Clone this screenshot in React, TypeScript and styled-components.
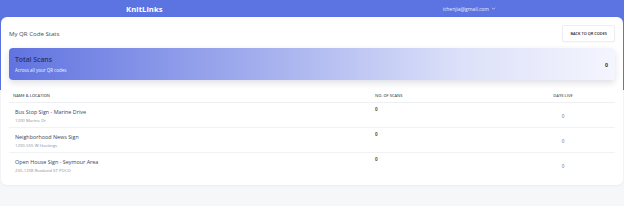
import styled, { createGlobalStyle } from 'styled-components';

const GlobalStyle = createGlobalStyle`
  html, body {
    margin: 0;
    padding: 0;
  }
  body {
    font-family: 'Open Sans', 'Liberation Sans', sans-serif;
    background: linear-gradient(to bottom, #5c73e2 0, #5c73e2 90px, #f6f7f9 90px);
    min-height: 206px;
  }
`;

const Nav = styled.header`
  height: 17px;
  display: flex;
  align-items: center;
  justify-content: space-between;
  padding: 0 128px 0 126px;
  color: #fff;
`;

const Brand = styled.div`
  font-size: 7.6px;
  font-weight: 700;
  letter-spacing: 0.1px;
`;

const Account = styled.div`
  display: flex;
  align-items: center;
  gap: 2px;
  font-size: 5px;
  color: #e8ebff;
`;

const Card = styled.main`
  margin: 0 1px;
  background: #fff;
  border-radius: 6px;
  padding: 8px 8px 8px;
  box-shadow: 0 1px 3px rgba(20, 30, 60, 0.05);
`;

const TitleRow = styled.div`
  display: flex;
  align-items: center;
  justify-content: space-between;
`;

const Title = styled.h1`
  margin: 0;
  font-size: 6.1px;
  font-weight: 400;
  color: #444a55;
`;

const BackButton = styled.button`
  height: 17px;
  padding: 0 7px;
  background: #fff;
  border: 1px solid #eceef2;
  border-radius: 2px;
  font-family: inherit;
  font-size: 3.9px;
  font-weight: 600;
  color: #222;
  text-transform: uppercase;
  box-shadow: 0 1px 2px rgba(0, 0, 0, 0.03);
`;

const Banner = styled.section`
  margin-top: 6px;
  height: 32px;
  border-radius: 4px;
  background: linear-gradient(90deg, #6173e0 0%, #a9b4ef 45%, #dde1f9 75%, #f4f5fe 100%);
  box-shadow: 0 3px 6px rgba(40, 50, 90, 0.15);
  display: flex;
  align-items: center;
  justify-content: space-between;
  padding: 0 7px 0 6px;
`;

const BannerText = styled.div`
  display: flex;
  flex-direction: column;
  gap: 3px;
`;

const BannerTitle = styled.div`
  font-size: 6.8px;
  font-weight: 600;
  color: #27326a;
`;

const BannerSub = styled.div`
  font-size: 4.5px;
  color: #f2f4ff;
`;

const BannerValue = styled.div`
  font-size: 5.2px;
  font-weight: 700;
  color: #333;
  padding-top: 2px;
`;

const Table = styled.div`
  margin-top: 9px;
`;

const Row = styled.div<{ $head?: boolean }>`
  display: grid;
  grid-template-columns: 362px 140px 1fr;
  height: ${(p) => (p.$head ? '13px' : '24px')};
  align-items: ${(p) => (p.$head ? 'center' : 'stretch')};
  border-bottom: 1px solid ${(p) => (p.$head ? '#eeeff2' : '#f1f2f4')};
  padding: 0 4px;

  &:last-child {
    border-bottom: none;
  }
`;

const HeadCell = styled.div<{ $center?: boolean }>`
  font-size: 4px;
  font-weight: 600;
  color: #555a66;
  text-transform: uppercase;
  text-align: ${(p) => (p.$center ? 'center' : 'left')};
`;

const NameCell = styled.div`
  display: flex;
  flex-direction: column;
  justify-content: center;
  gap: 1px;
  padding-left: 2px;
`;

const Name = styled.div`
  font-size: 5.4px;
  color: #3c4560;
`;

const Address = styled.div`
  font-size: 4.3px;
  color: #8a8f99;
`;

const ScanCell = styled.div`
  font-size: 4.6px;
  font-weight: 700;
  color: #555;
  padding-top: 3px;
`;

const DaysCell = styled.div`
  font-size: 4.6px;
  color: #666;
  display: flex;
  align-items: center;
  justify-content: center;
  padding-top: 2px;
`;

const rows = [
  { name: 'Bus Stop Sign - Marine Drive', address: '1200 Marine Dr', scans: 0, days: 0 },
  { name: 'Neighborhood News Sign', address: '1200-555 W Hastings', scans: 0, days: 0 },
  { name: 'Open House Sign - Seymour Area', address: '235-1208 Rowland ST POCO', scans: 0, days: 0 },
];

function App() {
  return (
    <>
      <GlobalStyle />
      <Nav>
        <Brand>KnitLinks</Brand>
        <Account>
          ichenjia@gmail.com
          <svg width="5" height="5" viewBox="0 0 10 10" fill="none" stroke="#e8ebff" strokeWidth="1.3">
            <path d="M2 3.5 L5 6.5 L8 3.5" />
          </svg>
        </Account>
      </Nav>
      <Card>
        <TitleRow>
          <Title>My QR Code Stats</Title>
          <BackButton>Back to QR Codes</BackButton>
        </TitleRow>
        <Banner>
          <BannerText>
            <BannerTitle>Total Scans</BannerTitle>
            <BannerSub>Across all your QR codes</BannerSub>
          </BannerText>
          <BannerValue>0</BannerValue>
        </Banner>
        <Table>
          <Row $head>
            <HeadCell>Name &amp; Location</HeadCell>
            <HeadCell>No. of Scans</HeadCell>
            <HeadCell $center>Days Live</HeadCell>
          </Row>
          {rows.map((r) => (
            <Row key={r.name}>
              <NameCell>
                <Name>{r.name}</Name>
                <Address>{r.address}</Address>
              </NameCell>
              <ScanCell>{r.scans}</ScanCell>
              <DaysCell>{r.days}</DaysCell>
            </Row>
          ))}
        </Table>
      </Card>
    </>
  );
}

export default App;
